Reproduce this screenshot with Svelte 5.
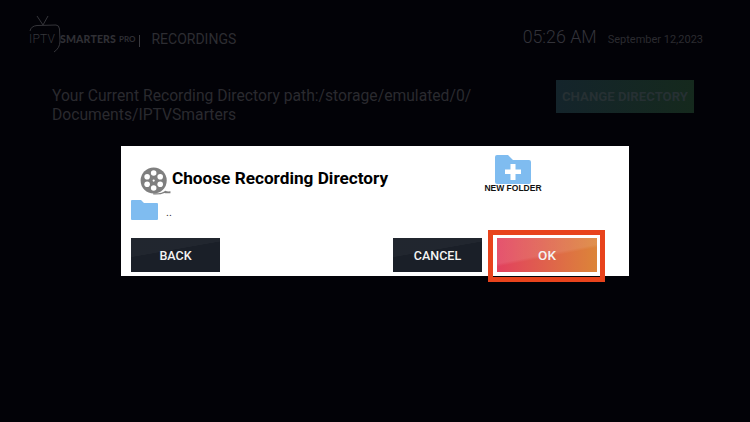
<script>
  const dateText = 'September 12,2023';
</script>

<div class="screen">
  <header class="topbar">
    <div class="brand">
      <svg class="tv" viewBox="0 0 36 36" width="36" height="36" fill="none" stroke="#35353a" stroke-width="1">
        <path d="M8 1 L14 10 L19 1" />
        <path d="M1 16 Q2 11 8 10.500 L27 10 Q30 10 30.500 14 L31 26 Q31 33 25 37" />
      </svg>
      <span class="iptv">IPTV</span>
      <span class="smarters">SMARTERS</span>
      <span class="pro">PRO</span>
      <span class="divider"></span>
      <span class="section">RECORDINGS</span>
    </div>
    <div class="clock">
      <span class="time">05:26 AM</span>
      <span class="date">{dateText}</span>
    </div>
  </header>

  <section class="path-row">
    <p class="path">Your Current Recording Directory path:/storage/emulated/0/<br />Documents/IPTVSmarters</p>
    <div class="change-btn">CHANGE DIRECTORY</div>
  </section>

  <div class="dialog">
    <div class="dialog-head">
      <svg class="reel" viewBox="0 0 34 30" width="32" height="28">
        <circle cx="14.500" cy="14.500" r="14" fill="#7f7f7f" />
        <g fill="#fff">
          <circle cx="14.500" cy="6.500" r="3" />
          <circle cx="14.500" cy="22.500" r="3" />
          <circle cx="7.500" cy="10.500" r="3" />
          <circle cx="21.500" cy="10.500" r="3" />
          <circle cx="7.500" cy="18.500" r="3" />
          <circle cx="21.500" cy="18.500" r="3" />
          <circle cx="14.500" cy="14.500" r="1.200" />
        </g>
        <path d="M14 28.200 Q24 28.500 27 25.500 Q29 26.500 32.500 26 L32.500 28 Q28 28.500 26 27.800 Q22 30 14 29.500 Z" fill="#7f7f7f" />
      </svg>
      <h2>Choose Recording Directory</h2>
      <div class="new-folder">
        <svg viewBox="0 0 36 29" width="36" height="29">
          <path d="M0 2 Q0 0 2 0 L13 0 L18 5 L34 5 Q36 5 36 7 L36 27 Q36 29 34 29 L2 29 Q0 29 0 27 Z" fill="#7fbcf0" />
          <path d="M15.500 9 H20.500 V14.500 H26 V19 H20.500 V25 H15.500 V19 H10 V14.500 H15.500 Z" fill="#fff" />
        </svg>
        <span>NEW FOLDER</span>
      </div>
    </div>

    <div class="parent-row">
      <svg viewBox="0 0 27 20" width="27" height="20">
        <path d="M0 1 Q0 0 1 0 L10 0 L13 3 L26 3 Q27 3 27 4 L27 19 Q27 20 26 20 L1 20 Q0 20 0 19 Z" fill="#7fbcf0" />
      </svg>
      <span>..</span>
    </div>

    <div class="actions">
      <div class="btn dark">BACK</div>
      <div class="spacer"></div>
      <div class="btn dark">CANCEL</div>
      <div class="btn ok">OK</div>
    </div>
  </div>
</div>

<style>
  :global(body) {
    margin: 0;
    background: #020207;
  }

  .screen {
    position: relative;
    width: 750px;
    height: 422px;
    overflow: hidden;
    background: #020207;
    font-family: Roboto, "Liberation Sans", sans-serif;
    color: #2b2b30;
  }

  .topbar {
    display: flex;
    justify-content: space-between;
    height: 60px;
    padding: 0 47px 0 29px;
  }

  .brand {
    position: relative;
    display: flex;
    align-items: center;
    height: 78px;
  }

  .tv {
    position: absolute;
    left: 0;
    top: 15px;
    overflow: visible;
  }

  .iptv {
    font-size: 12px;
    font-weight: 300;
    letter-spacing: 0.200px;
    color: #37373c;
    width: 31px;
  }

  .smarters {
    font-family: Lato, sans-serif;
    font-size: 10.500px;
    font-weight: 900;
    color: #2f2f34;
    letter-spacing: 0.150px;
  }

  .pro {
    font-family: Lato, sans-serif;
    font-size: 8px;
    font-weight: 700;
    color: #2f2f34;
    margin-left: 3px;
  }

  .divider {
    width: 1px;
    height: 12px;
    background: #3a3a3f;
    margin: 3px 11px 0 4px;
  }

  .section {
    font-size: 14px;
    color: #2d2d32;
  }

  .clock {
    display: flex;
    align-items: baseline;
    gap: 11px;
    padding-top: 26px;
    height: 30px;
  }

  .time {
    font-size: 17.800px;
    font-weight: 300;
    color: #33333a;
  }

  .date {
    font-size: 11px;
    color: #2b2b30;
  }

  .path-row {
    display: flex;
    justify-content: space-between;
    align-items: flex-start;
    padding: 20px 56px 0 52px;
  }

  .path {
    margin: 7px 0 0;
    font-size: 15.680px;
    line-height: 18.500px;
    color: #2a2a2f;
  }

  .change-btn {
    width: 138px;
    height: 33px;
    line-height: 34px;
    text-align: center;
    font-size: 13.200px;
    font-weight: 700;
    color: #263033;
    background: linear-gradient(90deg, #14242b, #15291d);
    white-space: nowrap;
  }

  .dialog {
    position: absolute;
    left: 121px;
    top: 146px;
    width: 508px;
    height: 130px;
    box-sizing: border-box;
    padding: 0 10px;
    background: #fff;
    display: flex;
    flex-direction: column;
  }

  .dialog-head {
    display: flex;
    align-items: flex-start;
    height: 53px;
  }

  .reel {
    margin: 21px 0 0 9px;
    flex: none;
  }

  h2 {
    margin: 22px 0 0 0;
    font-size: 17.200px;
    line-height: 20px;
    font-weight: 700;
    color: #000;
    white-space: nowrap;
    width: 312px;
  }

  .new-folder {
    display: flex;
    flex-direction: column;
    align-items: center;
    width: 58px;
    margin-top: 9px;
  }

  .new-folder span {
    font-family: "Liberation Sans", sans-serif;
    font-size: 8.500px;
    line-height: 9px;
    font-weight: 700;
    color: #111;
    white-space: nowrap;
  }

  .parent-row {
    display: flex;
    align-items: center;
    gap: 8px;
    height: 22px;
    margin-top: 0;
    color: #333;
  }

  .parent-row svg {
    flex: none;
  }

  .parent-row span {
    font-size: 11px;
    line-height: 14px;
    padding-top: 5px;
  }

  .actions {
    display: flex;
    align-items: center;
    margin-top: 17px;
  }

  .spacer {
    flex: 1;
  }

  .btn {
    height: 34px;
    line-height: 35px;
    text-align: center;
    font-size: 12.500px;
    font-weight: 500;
    color: #f4f4f4;
  }

  .dark {
    width: 89px;
    background:
      linear-gradient(170deg, rgba(255, 255, 255, 0.03) 0 38%, transparent 39%),
      #1a1f28;
  }

  .ok {
    position: relative;
    width: 100px;
    margin: 0 22px 0 15px;
    font-size: 13.500px;
    background:
      linear-gradient(169deg, rgba(255, 255, 255, 0.1) 0 48%, transparent 54%),
      linear-gradient(90deg, #e2405f, #dc8538);
  }

  /* annotation frame drawn on top of the OK button */
  .ok::after {
    content: '';
    position: absolute;
    left: -9px;
    top: -8px;
    width: 107px;
    height: 42px;
    border: 5px solid #e8431c;
  }
</style>
